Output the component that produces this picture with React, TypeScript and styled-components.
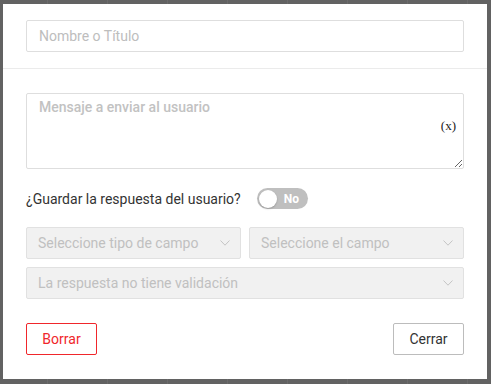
import React from 'react';
import styled, { createGlobalStyle } from 'styled-components';

const GlobalStyle = createGlobalStyle`
  html, body {
    margin: 0;
    padding: 0;
  }
  body {
    background-color: #626262;
    background-image: repeating-linear-gradient(
      90deg,
      transparent 0px,
      transparent 47px,
      #6b6b6b 47px,
      #6b6b6b 48px,
      transparent 48px,
      transparent 60px
    );
    font-family: Roboto, 'Liberation Sans', sans-serif;
  }
`;

const Overlay = styled.div`
  padding: 4px 4px 5px 3px;
`;

const Modal = styled.div`
  width: 484px;
  height: 375px;
  background: #ffffff;
  display: flex;
  flex-direction: column;
`;

const Header = styled.div`
  padding: 16px 23px;
  border-bottom: 1px solid #ebebeb;
`;

const TextInput = styled.input`
  box-sizing: border-box;
  width: 100%;
  height: 32px;
  border: 1px solid #dedede;
  border-radius: 2px;
  padding: 0 12px;
  font-family: Roboto, 'Liberation Sans', sans-serif;
  font-size: 14px;
  color: #333;
  outline: none;
  &::placeholder {
    color: #bdbdbd;
  }
`;

const Body = styled.div`
  padding: 24px 23px 24px;
  display: flex;
  flex-direction: column;
  flex: 1;
`;

const AreaWrap = styled.div`
  position: relative;
  height: 76px;
`;

const MessageArea = styled.textarea`
  box-sizing: border-box;
  width: 100%;
  height: 76px;
  display: block;
  border: 1px solid #dedede;
  border-radius: 2px;
  padding: 5px 12px;
  font-family: Roboto, 'Liberation Sans', sans-serif;
  font-size: 14px;
  font-weight: 500;
  color: #333;
  outline: none;
  &::placeholder {
    color: #c2c2c2;
  }
`;

const VarButton = styled.span`
  position: absolute;
  right: 8px;
  top: 25px;
  font-family: 'Liberation Serif', serif;
  font-size: 13px;
  color: #222;
`;

const SaveRow = styled.div`
  margin-top: 19px;
  display: flex;
  align-items: center;
  gap: 16px;
  height: 21px;
`;

const Label = styled.span`
  font-size: 14px;
  color: #333;
`;

const Toggle = styled.div`
  width: 51px;
  height: 21px;
  border-radius: 11px;
  background: #bfbfbf;
  display: flex;
  align-items: center;
  padding: 0 2px;
  box-sizing: border-box;
  gap: 7px;
`;

const Knob = styled.div`
  width: 18px;
  height: 18px;
  border-radius: 50%;
  background: #fff;
  box-shadow: 0 1px 2px rgba(0, 0, 0, 0.2);
`;

const ToggleText = styled.span`
  color: #fff;
  font-size: 12px;
  font-weight: 700;
`;

const SelectRow = styled.div<{ $top: number }>`
  margin-top: ${p => p.$top}px;
  display: flex;
  gap: 8px;
`;

const Select = styled.div`
  flex: 1;
  height: 32px;
  box-sizing: border-box;
  background: #f1f1f1;
  border: 1px solid #e1e1e1;
  border-radius: 2px;
  display: flex;
  align-items: center;
  justify-content: space-between;
  padding: 0 10px 0 11px;
  font-size: 14px;
  color: #c0c0c0;
`;

const Footer = styled.div`
  margin-top: auto;
  display: flex;
  justify-content: space-between;
`;

const Button = styled.button<{ $danger?: boolean }>`
  width: 71px;
  height: 32px;
  background: #fff;
  border: 1px solid ${p => (p.$danger ? '#f0262b' : '#bcbcbc')};
  border-radius: 2px;
  color: ${p => (p.$danger ? '#f0262b' : '#333')};
  font-family: Roboto, 'Liberation Sans', sans-serif;
  font-size: 14px;
  cursor: pointer;
`;

const Chevron = () => (
  <svg width="10" height="6" viewBox="0 0 10 6">
    <polyline points="0.5,0.5 5,5.2 9.5,0.5" fill="none" stroke="#c4c4c4" strokeWidth="1" />
  </svg>
);

const App = () => {
  return (
    <>
      <GlobalStyle />
      <Overlay>
        <Modal>
          <Header>
            <TextInput placeholder="Nombre o Título" />
          </Header>
          <Body>
            <AreaWrap>
              <MessageArea placeholder="Mensaje a enviar al usuario" />
              <VarButton>(x)</VarButton>
            </AreaWrap>
            <SaveRow>
              <Label>¿Guardar la respuesta del usuario?</Label>
              <Toggle>
                <Knob />
                <ToggleText>No</ToggleText>
              </Toggle>
            </SaveRow>
            <SelectRow $top={18}>
              <Select>
                Seleccione tipo de campo
                <Chevron />
              </Select>
              <Select>
                Seleccione el campo
                <Chevron />
              </Select>
            </SelectRow>
            <SelectRow $top={8}>
              <Select>
                La respuesta no tiene validación
                <Chevron />
              </Select>
            </SelectRow>
            <Footer>
              <Button $danger>Borrar</Button>
              <Button>Cerrar</Button>
            </Footer>
          </Body>
        </Modal>
      </Overlay>
    </>
  );
};

export default App;
